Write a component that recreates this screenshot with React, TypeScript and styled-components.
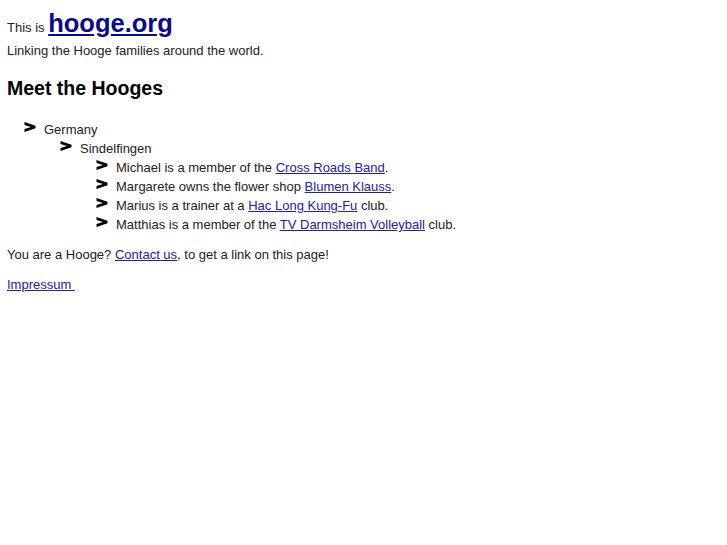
import React from 'react';
import styled, { createGlobalStyle } from 'styled-components';

const GlobalStyle = createGlobalStyle`
  body {
    margin: 0;
    padding: 7px;
    background: #fff;
    color: #222;
    font-family: "Liberation Sans", Arial, sans-serif;
    font-size: 13px;
  }
  a {
    color: #2121a8;
  }
`;

const Header = styled.div`
  margin: 1px 0 0;
  line-height: 31px;
`;

const SiteLink = styled.a`
  font-size: 25.5px;
  font-weight: 700;
  color: #0a0a8c;
`;

const Tagline = styled.p`
  margin: 0;
  line-height: 16px;
`;

const Title = styled.h2`
  margin: 18px 0 20px;
  font-size: 19.5px;
  font-weight: 700;
  color: #000;
`;

const List = styled.ul<{ $indent: number }>`
  list-style: none;
  margin: 0;
  padding: 0 0 0 ${({ $indent }) => $indent}px;
`;

const Item = styled.li`
  line-height: 19px;
`;

const Row = styled.div`
  display: flex;
  align-items: flex-start;
  gap: 8px;
`;

const Arrow = styled.svg`
  flex: none;
  width: 12px;
  height: 10px;
  margin-top: 2px;
`;

const Paragraph = styled.p<{ $top: number }>`
  margin: ${({ $top }) => $top}px 0 0;
  line-height: 19px;
`;

const Bullet = () => (
  <Arrow viewBox="0 0 12 10">
    <path d="M0.5 0 L11.5 3.8 L11.5 6.2 L0.5 10 L0.5 7 L7 5 L0.5 3 Z" fill="#000" />
  </Arrow>
);

type Entry = { text: React.ReactNode; children?: Entry[] };

const tree: Entry[] = [
  {
    text: 'Germany',
    children: [
      {
        text: 'Sindelfingen',
        children: [
          { text: <>Michael is a member of the <a href="#">Cross Roads Band</a>.</> },
          { text: <>Margarete owns the flower shop <a href="#">Blumen Klauss</a>.</> },
          { text: <>Marius is a trainer at a <a href="#">Hac Long Kung-Fu</a> club.</> },
          { text: <>Matthias is a member of the <a href="#">TV Darmsheim Volleyball</a> club.</> },
        ],
      },
    ],
  },
];

function Tree({ entries, indent }: { entries: Entry[]; indent: number }) {
  return (
    <List $indent={indent}>
      {entries.map((e, i) => (
        <Item key={i}>
          <Row>
            <Bullet />
            <span>{e.text}</span>
          </Row>
          {e.children && <Tree entries={e.children} indent={36} />}
        </Item>
      ))}
    </List>
  );
}

export default function App() {
  return (
    <>
      <GlobalStyle />
      <Header>
        This is <SiteLink href="#">hooge.org</SiteLink>
      </Header>
      <Tagline>Linking the Hooge families around the world.</Tagline>
      <Title>Meet the Hooges</Title>
      <Tree entries={tree} indent={17} />
      <Paragraph $top={11}>
        You are a Hooge? <a href="#">Contact us</a>, to get a link on this page!
      </Paragraph>
      <Paragraph $top={11}>
        <a href="#">Impressum&nbsp;</a>
      </Paragraph>
    </>
  );
}
